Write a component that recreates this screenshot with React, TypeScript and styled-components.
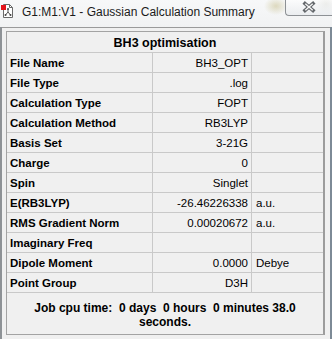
import { Fragment } from 'react';
import styled, { createGlobalStyle } from 'styled-components';

const GlobalStyle = createGlobalStyle`
  html, body {
    margin: 0;
    padding: 0;
    background: #f0f0f0;
    overflow: hidden;
  }
`;

const Window = styled.div`
  width: 332px;
  height: 339px;
  box-sizing: border-box;
  display: flex;
  flex-direction: column;
  border-left: 2px solid #8e9296;
  border-right: 2px solid #7d8a96;
  background: #f0f0f0;
  font-family: 'Liberation Sans', Arial, sans-serif;
`;

const TitleBar = styled.div`
  height: 27px;
  display: flex;
  align-items: flex-start;
  margin-left: -2px;
  margin-right: -2px;
  background:
    radial-gradient(ellipse 12px 9px at 276px 6px, rgba(190, 180, 120, 0.45), rgba(190, 180, 120, 0) 100%),
    radial-gradient(ellipse 10px 9px at 326px 4px, rgba(170, 170, 150, 0.35), rgba(170, 170, 150, 0) 100%),
    linear-gradient(#f7f8f9, #f1f2f3);
`;

const TitleIcon = styled.svg`
  width: 12px;
  height: 14px;
  margin: 4px 0 0 1px;
  flex: none;
`;

const TitleText = styled.div`
  margin: 5px 0 0 9px;
  font-size: 12px;
  line-height: 14px;
  color: #1b1b1b;
  white-space: nowrap;
`;

const CloseButton = styled.div`
  flex: none;
  margin-left: auto;
  width: 47px;
  height: 16px;
  box-sizing: border-box;
  border: 1px solid #8d9195;
  border-top: none;
  border-right: none;
  border-radius: 0 0 0 4px;
  background: linear-gradient(rgba(255, 255, 255, 0.55), rgba(232, 235, 238, 0.75));
  display: flex;
  align-items: center;
  justify-content: center;
  padding-bottom: 2px;
`;

const CloseGlyphSvg = styled.svg`
  display: block;
  flex: none;
  width: 12px;
  height: 10px;
  overflow: visible;
`;

const Client = styled.div`
  flex: 1;
  border-top: 1px solid #9a9a9a;
  padding: 3px 5px 4px 4px;
  display: flex;
`;

const Grid = styled.div`
  width: 319px;
  box-sizing: border-box;
  border: 1px solid #a3a3a3;
  border-right: 2px solid #9c9c9c;
  display: grid;
  grid-template-columns: 146px 99px 1fr;
  grid-template-rows: 21px repeat(12, 20px) 41px;
  font-size: 11.5px;
  color: #000;
`;

const HeaderCell = styled.div`
  grid-column: 1 / 4;
  border-bottom: 1px solid #c9c9c9;
  display: flex;
  align-items: center;
  justify-content: center;
  font-weight: bold;
  font-size: 12.5px;
  padding-top: 1px;
`;

const Cell = styled.div<{ $kind: 'label' | 'value' | 'unit' }>`
  box-sizing: border-box;
  border-bottom: 1px solid #c9c9c9;
  border-right: ${(p) => (p.$kind === 'unit' ? 'none' : '1px solid #c9c9c9')};
  display: flex;
  align-items: center;
  justify-content: ${(p) => (p.$kind === 'value' ? 'flex-end' : 'flex-start')};
  padding: ${(p) =>
    p.$kind === 'label' ? '0 0 0 3px' : p.$kind === 'value' ? '0 3px 0 0' : '0 0 0 4px'};
  font-weight: ${(p) => (p.$kind === 'label' ? 'bold' : 'normal')};
  white-space: nowrap;
`;

const FooterCell = styled.div`
  grid-column: 1 / 4;
  display: flex;
  align-items: center;
  justify-content: center;
  text-align: center;
  font-weight: bold;
  font-size: 12px;
  line-height: 14px;
  padding: 2px 20px 0 20px;
  white-space: pre-wrap;
`;

const rows: [string, string, string][] = [
  ['File Name', 'BH3_OPT', ''],
  ['File Type', '.log', ''],
  ['Calculation Type', 'FOPT', ''],
  ['Calculation Method', 'RB3LYP', ''],
  ['Basis Set', '3-21G', ''],
  ['Charge', '0', ''],
  ['Spin', 'Singlet', ''],
  ['E(RB3LYP)', '-26.46226338', 'a.u.'],
  ['RMS Gradient Norm', '0.00020672', 'a.u.'],
  ['Imaginary Freq', '', ''],
  ['Dipole Moment', '0.0000', 'Debye'],
  ['Point Group', 'D3H', ''],
];

function DocIcon() {
  return (
    <TitleIcon viewBox="0 0 12 14">
      <path d="M2.5 0.5 H8.5 L11.5 3.5 V13.5 H2.5 Z" fill="#fff" stroke="#6a6a6a" />
      <path d="M8.5 0.5 V3.5 H11.5" fill="none" stroke="#6a6a6a" />
      <rect x="0" y="1" width="5" height="5" fill="#e3141b" />
      <path d="M7 5 V8 M7 8 L4.5 11 M7 8 L9.5 11" stroke="#555" strokeWidth="1" fill="none" />
      <circle cx="7" cy="5" r="1" fill="#444" />
      <circle cx="4.5" cy="11" r="1" fill="#444" />
      <circle cx="9.5" cy="11" r="1" fill="#444" />
    </TitleIcon>
  );
}

function CloseGlyph() {
  return (
    <CloseGlyphSvg width="12" height="10" viewBox="0 0 12 10">
      <line x1="2" y1="1.5" x2="10" y2="8.5" stroke="#63676b" strokeWidth="3.6" strokeLinecap="square" />
      <line x1="10" y1="1.5" x2="2" y2="8.5" stroke="#63676b" strokeWidth="3.6" strokeLinecap="square" />
      <line x1="2.3" y1="1.8" x2="9.7" y2="8.2" stroke="#f6f6f6" strokeWidth="1.4" />
      <line x1="9.7" y1="1.8" x2="2.3" y2="8.2" stroke="#f6f6f6" strokeWidth="1.4" />
    </CloseGlyphSvg>
  );
}

export default function App() {
  return (
    <>
      <GlobalStyle />
      <Window>
        <TitleBar>
          <DocIcon />
          <TitleText>G1:M1:V1 - Gaussian Calculation Summary</TitleText>
          <CloseButton>
            <CloseGlyph />
          </CloseButton>
        </TitleBar>
        <Client>
          <Grid>
            <HeaderCell>BH3 optimisation</HeaderCell>
            {rows.map(([label, value, unit]) => (
              <Fragment key={label}>
                <Cell $kind="label">{label}</Cell>
                <Cell $kind="value">{value}</Cell>
                <Cell $kind="unit">{unit}</Cell>
              </Fragment>
            ))}
            <FooterCell>{'Job cpu time:  0 days  0 hours  0 minutes 38.0 seconds.'}</FooterCell>
          </Grid>
        </Client>
      </Window>
    </>
  );
}
